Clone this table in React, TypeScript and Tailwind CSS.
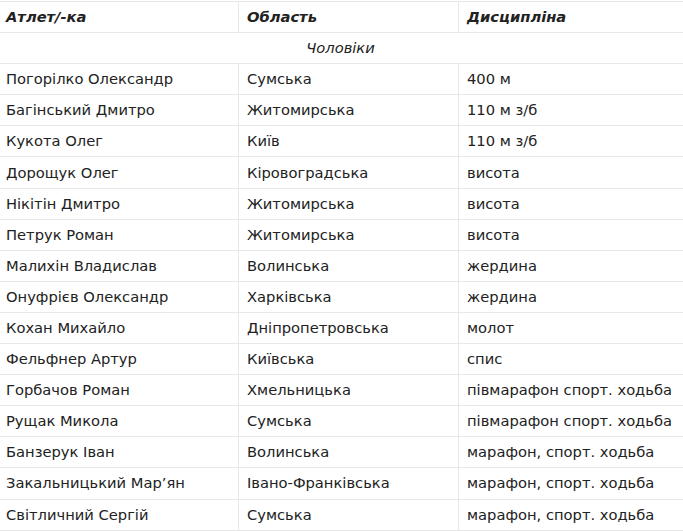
import React from 'react';

const rows: [string, string, string][] = [
  ['Погорілко Олександр', 'Сумська', '400 м'],
  ['Багінський Дмитро', 'Житомирська', '110 м з/б'],
  ['Кукота Олег', 'Київ', '110 м з/б'],
  ['Дорощук Олег', 'Кіровоградська', 'висота'],
  ['Нікітін Дмитро', 'Житомирська', 'висота'],
  ['Петрук Роман', 'Житомирська', 'висота'],
  ['Малихін Владислав', 'Волинська', 'жердина'],
  ['Онуфрієв Олександр', 'Харківська', 'жердина'],
  ['Кохан Михайло', 'Дніпропетровська', 'молот'],
  ['Фельфнер Артур', 'Київська', 'спис'],
  ['Горбачов Роман', 'Хмельницька', 'півмарафон спорт. ходьба'],
  ['Рущак Микола', 'Сумська', 'півмарафон спорт. ходьба'],
  ['Банзерук Іван', 'Волинська', 'марафон, спорт. ходьба'],
  ['Закальницький Мар’ян', 'Івано-Франківська', 'марафон, спорт. ходьба'],
  ['Світличний Сергій', 'Сумська', 'марафон, спорт. ходьба'],
];

const cell = 'border border-[#e8e8e8] px-[8px] h-[31.1px] py-0 align-middle whitespace-nowrap';

export default function App() {
  return (
    <div className="w-[683px] h-[532px] overflow-hidden bg-white pt-px">
      <table
        className="-ml-[3px] w-[686px] border-collapse table-fixed text-[14.7px] leading-[18px] text-[#222]"
        style={{ fontFamily: '"DejaVu Sans", Verdana, sans-serif' }}
      >
        <colgroup>
          <col className="w-[241px]" />
          <col className="w-[220px]" />
          <col className="w-[225px]" />
        </colgroup>
        <thead>
          <tr>
            <th className={`${cell} text-left font-bold italic`}>Атлет/-ка</th>
            <th className={`${cell} text-left font-bold italic`}>Область</th>
            <th className={`${cell} text-left font-bold italic`}>Дисципліна</th>
          </tr>
        </thead>
        <tbody>
          <tr>
            <td colSpan={3} className={`${cell} text-center italic`}>
              Чоловіки
            </td>
          </tr>
          {rows.map(([name, region, discipline]) => (
            <tr key={name}>
              <td className={cell}>{name}</td>
              <td className={cell}>{region}</td>
              <td className={cell}>{discipline}</td>
            </tr>
          ))}
        </tbody>
      </table>
    </div>
  );
}
